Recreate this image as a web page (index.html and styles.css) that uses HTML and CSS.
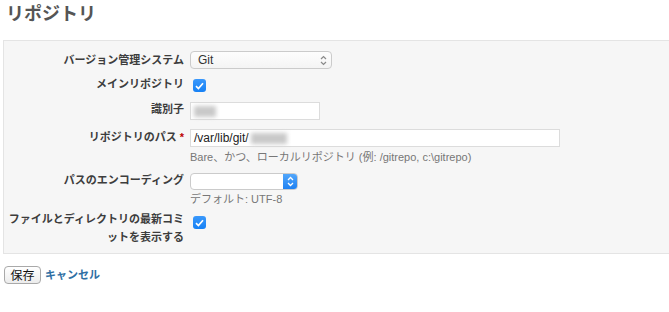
FILE: index.html
```html
<!DOCTYPE html>
<html lang="ja">
<head>
  <meta charset="UTF-8" />
  <title>リポジトリ</title>
  <link rel="stylesheet" href="styles.css">
</head>
<body>

<h2 class="title">リポジトリ</h2>

<form class="repo-form">
  <div class="box">
    <div class="row row-scm">
      <label>バージョン管理システム</label>
      <div class="field">
        <div class="select select-scm">
          <span>Git</span>
          <svg class="chev" width="7" height="11" viewBox="0 0 7 11"><path d="M1 4 L3.5 1.5 L6 4 M1 7 L3.5 9.5 L6 7" fill="none" stroke="#8a8a8a" stroke-width="1.2"/></svg>
        </div>
      </div>
    </div>

    <div class="row row-main">
      <label>メインリポジトリ</label>
      <div class="field">
        <span class="check"><svg width="9" height="8" viewBox="0 0 9 8"><path d="M1 4.2 L3.4 6.5 L8 1.2" fill="none" stroke="#fff" stroke-width="1.7"/></svg></span>
      </div>
    </div>

    <div class="row row-ident">
      <label>識別子</label>
      <div class="field">
        <div class="input input-ident"><span class="blur blur-ident"></span></div>
      </div>
    </div>

    <div class="row row-path">
      <label>リポジトリのパス <span class="required">*</span></label>
      <div class="field">
        <div class="input input-path">/var/lib/git/<span class="blur blur-path"></span></div>
        <em class="info">Bare、かつ、ローカルリポジトリ (例: /gitrepo, c:\gitrepo)</em>
      </div>
    </div>

    <div class="row row-enc">
      <label>パスのエンコーディング</label>
      <div class="field">
        <div class="select select-enc">
          <span class="arrow">
            <svg width="7" height="11" viewBox="0 0 7 11"><path d="M1 4 L3.5 1.5 L6 4 M1 7 L3.5 9.5 L6 7" fill="none" stroke="#fff" stroke-width="1.3"/></svg>
          </span>
        </div>
        <em class="info info-enc">デフォルト: UTF-8</em>
      </div>
    </div>

    <div class="row row-latest">
      <label>ファイルとディレクトリの最新コミットを表示する</label>
      <div class="field">
        <span class="check"><svg width="9" height="8" viewBox="0 0 9 8"><path d="M1 4.2 L3.4 6.5 L8 1.2" fill="none" stroke="#fff" stroke-width="1.7"/></svg></span>
      </div>
    </div>
  </div>

  <div class="actions">
    <button type="button">保存</button>
    <a href="#">キャンセル</a>
  </div>
</form>

</body>
</html>
```

FILE: styles.css
```css
* {
  box-sizing: border-box;
}

body {
  margin: 0;
  padding: 0 0 0 3px;
  background: #fff;
  color: #444;
  font-family: "Liberation Sans", "Noto Sans CJK JP", sans-serif;
  font-size: 11px;
}

.title {
  margin: 0;
  height: 40px;
  padding: 3px 0 0 3px;
  font-size: 18px;
  line-height: 22px;
  font-weight: bold;
  color: #555;
}

/* form box */
.box {
  background: #f6f6f6;
  border: 1px solid #e4e4e4;
  border-right: none;
  padding: 10px 0 7px;
}

.row {
  display: grid;
  grid-template-columns: 180px 1fr;
  column-gap: 6px;
  align-items: start;
}

.row label {
  text-align: right;
  font-weight: bold;
  line-height: 14px;
  color: #3d3d3d;
}

.required {
  color: #bb0000;
}

.row-scm label { padding-top: 2px; }
.row-main { margin-top: 8px; }
.row-main label { line-height: 15px; }
.row-ident { margin-top: 10px; }
.row-path { margin-top: 9px; }
.row-path label { padding-top: 1px; }
.row-enc { margin-top: 8px; }
.row-latest { margin-top: 3px; }
.row-latest label { line-height: 18px; }

.field {
  display: flex;
  flex-direction: column;
  align-items: flex-start;
}

/* selects */
.select {
  position: relative;
  display: flex;
  align-items: center;
  background: linear-gradient(#fdfdfd, #f4f4f4);
  border: 1px solid #cbcbcb;
  border-radius: 4px;
  font-size: 12px;
  color: #333;
}

.select-scm {
  width: 142px;
  height: 18px;
  padding-left: 7px;
}

.select-scm .chev {
  position: absolute;
  right: 4px;
  top: 3px;
}

.select-enc {
  width: 108px;
  height: 17px;
  background: #fff;
  overflow: hidden;
}

.select-enc .arrow {
  position: absolute;
  right: -1px;
  top: -1px;
  width: 15px;
  height: 17px;
  display: flex;
  align-items: center;
  justify-content: center;
  background: linear-gradient(#56a9fb, #1b7ff2);
  border-radius: 0 4px 4px 0;
}

/* checkbox */
.check {
  display: flex;
  align-items: center;
  justify-content: center;
  width: 13px;
  height: 13px;
  margin: 2px 0 0 3px;
  background: linear-gradient(#3a98fb, #1681f5);
  border-radius: 3px;
}

.row-latest .check {
  margin-top: 6px;
}

/* text inputs */
.input {
  display: flex;
  align-items: center;
  height: 18px;
  background: #fff;
  border: 1px solid #dcdcdc;
  padding-left: 3px;
  font-size: 12px;
  color: #222;
}

.input-ident {
  width: 130px;
}

.input-path {
  width: 370px;
}

.blur {
  display: inline-block;
  height: 11px;
  background: #c9c9c9;
  filter: blur(2px);
}

.blur-ident {
  width: 22px;
}

.blur-path {
  width: 36px;
  margin-left: 2px;
}

.info {
  font-style: normal;
  color: #777;
  font-size: 11px;
  line-height: 16px;
  margin-top: 2px;
}

.info-enc {
  margin-top: 1px;
}

/* actions */
.actions {
  display: flex;
  align-items: center;
  margin-top: 12px;
  padding-left: 1px;
}

.actions button {
  width: 37px;
  height: 18px;
  padding: 0;
  border: 1px solid #a9a9a9;
  border-radius: 4px;
  background: linear-gradient(#fff, #ececec);
  font-family: "Noto Sans CJK JP", sans-serif;
  font-size: 12px;
  line-height: 14px;
  color: #111;
}

.actions a {
  margin-left: 4px;
  margin-top: -3px;
  color: #2e6ea3;
  font-weight: bold;
  text-decoration: none;
}
```
